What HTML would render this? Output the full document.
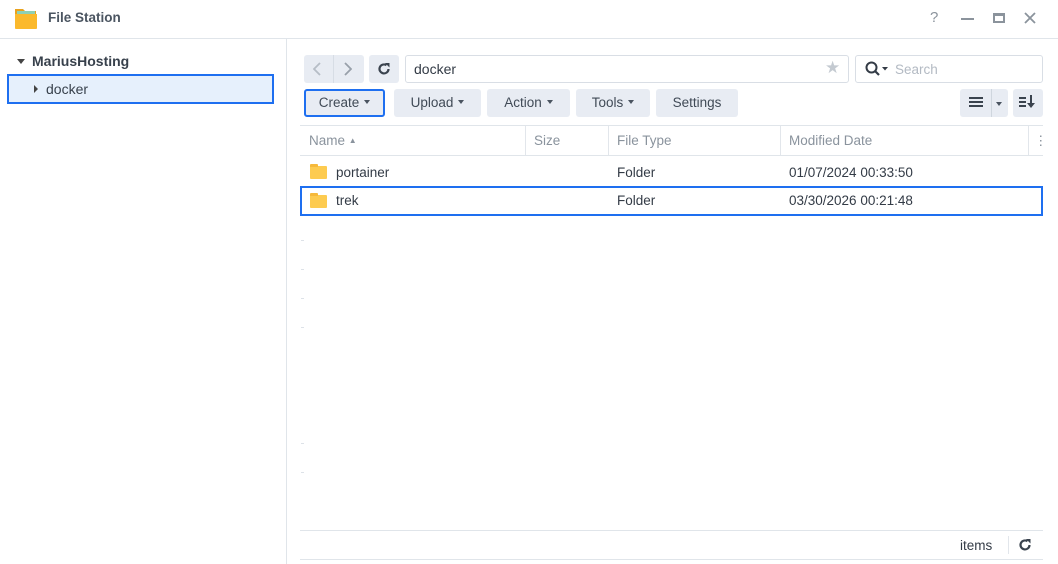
<!DOCTYPE html>
<html><head><meta charset="utf-8"><style>
*{box-sizing:border-box;margin:0;padding:0}
body{width:1058px;height:564px;background:#fff;font-family:"Liberation Sans",sans-serif;font-size:13px;color:#333b46;position:relative;overflow:hidden}
.a{position:absolute}
.btn{position:absolute;background:#e8ecf3;border-radius:3px;height:28px;line-height:28px;text-align:center;color:#404a56;font-size:13.5px}
.caret{display:inline-block;width:0;height:0;border-left:3.5px solid transparent;border-right:3.5px solid transparent;border-top:4px solid #4a5460;vertical-align:middle;margin-left:5px;margin-top:-2px}
.hd{position:absolute;top:126px;height:30px;line-height:29px;color:#8a939d;font-size:13.5px}
.vl{position:absolute;width:1px;background:#e2e6eb}
.row{position:absolute;left:300px;width:743px;height:29px;line-height:29px;font-size:13.5px;color:#333b46}
.fold{position:absolute;left:10px;top:8px;width:17px;height:13px;background:#fdcb50;border-radius:1px}
.fold:before{content:"";position:absolute;left:0;top:-2px;width:8px;height:3px;background:#f6b93b;border-radius:1px 1px 0 0}
.tick{position:absolute;left:301px;width:3px;height:1px;background:#dde2e8}
</style></head><body>
<!-- title bar -->
<div class="a" style="left:14px;top:7px;width:24px;height:24px">
<svg width="24" height="24" viewBox="0 0 24 24"><path d="M1 2h8l2 2h11v17H1z" fill="#e9a21d"/><rect x="3" y="4" width="18" height="6" fill="#8fd0b4"/><path d="M1 7h22v14c0 1-1 1-1 1H2c-1 0-1-1-1-1z" fill="#fbb92c"/></svg></div>
<div class="a" style="left:48px;top:10px;font-size:13.5px;font-weight:bold;color:#4b5561">File Station</div>
<div class="a" style="left:930px;top:9px;color:#8b939c;font-size:15px">?</div>
<div class="a" style="left:961px;top:18px;width:13px;height:2px;background:#8b939c"></div>
<div class="a" style="left:993px;top:13px;width:12px;height:10px;border:2px solid #8b939c;border-top-width:3px"></div>
<svg class="a" style="left:1024px;top:12px" width="12" height="12" viewBox="0 0 12 12"><path d="M1 1l10 10M11 1L1 11" stroke="#8b939c" stroke-width="1.8"/></svg>
<div class="a" style="left:0;top:38px;width:1058px;height:1px;background:#e0e5ea"></div>
<div class="a" style="left:286px;top:39px;width:1px;height:525px;background:#e0e5ea"></div>
<!-- tree -->
<div class="a" style="left:17px;top:59px;border-left:4.5px solid transparent;border-right:4.5px solid transparent;border-top:5px solid #444"></div>
<div class="a" style="left:32px;top:53px;font-weight:bold;font-size:14px;color:#38414c">MariusHosting</div>
<div class="a" style="left:7px;top:74px;width:267px;height:30px;background:#e6f0fc;border:2px solid #1e6ff0"></div>
<div class="a" style="left:34px;top:85px;border-top:4px solid transparent;border-bottom:4px solid transparent;border-left:4.5px solid #444"></div>
<div class="a" style="left:46px;top:81px;font-size:14px;color:#38414c">docker</div>
<!-- nav -->
<div class="btn" style="left:304px;top:55px;width:60px"></div>
<div class="vl" style="left:333px;top:55px;height:28px;background:#d7dde5"></div>
<svg class="a" style="left:313px;top:62px" width="8" height="14" viewBox="0 0 8 14"><path d="M7 1L1 7l6 6" fill="none" stroke="#b6bdc6" stroke-width="1.8"/></svg>
<svg class="a" style="left:344px;top:62px" width="8" height="14" viewBox="0 0 8 14"><path d="M1 1l6 6-6 6" fill="none" stroke="#98a0aa" stroke-width="1.8"/></svg>
<div class="btn" style="left:369px;top:55px;width:30px">
<svg width="14" height="14" viewBox="0 0 14 14" style="margin-top:7px"><path d="M11.5 7A4.5 4.5 0 1 1 9.5 3.2" fill="none" stroke="#3a434e" stroke-width="2.2"/><path d="M8 1h4.5v4.5z" fill="#3a434e"/></svg></div>
<div class="a" style="left:405px;top:55px;width:444px;height:28px;border:1px solid #d9dee5;border-radius:3px"></div>
<div class="a" style="left:414px;top:61px;font-size:14px;color:#333b46">docker</div>
<div class="a" style="left:825px;top:58px;color:#c4cad1;font-size:17px">★</div>
<div class="a" style="left:855px;top:55px;width:188px;height:28px;border:1px solid #d9dee5;border-radius:3px"></div>
<svg class="a" style="left:865px;top:61px" width="26" height="16" viewBox="0 0 26 16"><circle cx="6.5" cy="6.5" r="5" fill="none" stroke="#333b46" stroke-width="2"/><path d="M10 10l4 4" stroke="#333b46" stroke-width="2.2"/><path d="M17 6h6l-3 3.5z" fill="#333b46"/></svg>
<div class="a" style="left:895px;top:62px;color:#b3bac3;font-size:13.5px">Search</div>
<!-- toolbar -->
<div class="btn" style="left:304px;top:89px;width:81px;border:2px solid #1e6ff0;line-height:24px">Create<span class="caret"></span></div>
<div class="btn" style="left:394px;top:89px;width:87px">Upload<span class="caret"></span></div>
<div class="btn" style="left:487px;top:89px;width:83px">Action<span class="caret"></span></div>
<div class="btn" style="left:576px;top:89px;width:74px">Tools<span class="caret"></span></div>
<div class="btn" style="left:656px;top:89px;width:82px">Settings</div>
<div class="btn" style="left:960px;top:89px;width:48px"></div>
<div class="a" style="left:969px;top:97px;width:14px;height:2px;background:#3a434e;box-shadow:0 4px 0 #3a434e,0 8px 0 #3a434e"></div>
<div class="vl" style="left:991px;top:89px;height:28px;background:#cfd6de"></div>
<div class="a" style="left:996px;top:102px;border-left:3.5px solid transparent;border-right:3.5px solid transparent;border-top:4px solid #4a5460"></div>
<div class="btn" style="left:1013px;top:89px;width:30px"></div>
<div class="a" style="left:1019px;top:97px;width:7px;height:2px;background:#3a434e;box-shadow:0 4px 0 #3a434e,0 8px 0 #3a434e"></div>
<div class="a" style="left:1030px;top:95px;width:2px;height:10px;background:#3a434e"></div>
<div class="a" style="left:1027px;top:103px;border-left:4px solid transparent;border-right:4px solid transparent;border-top:5px solid #3a434e"></div>
<!-- header -->
<div class="a" style="left:300px;top:125px;width:743px;height:1px;background:#e0e5ea"></div>
<div class="a" style="left:300px;top:155px;width:743px;height:1px;background:#e0e5ea"></div>
<div class="hd" style="left:309px">Name <span style="font-size:8px;vertical-align:2px">▲</span></div>
<div class="vl" style="left:525px;top:126px;height:29px"></div>
<div class="hd" style="left:534px">Size</div>
<div class="vl" style="left:608px;top:126px;height:29px"></div>
<div class="hd" style="left:617px">File Type</div>
<div class="vl" style="left:780px;top:126px;height:29px"></div>
<div class="hd" style="left:789px">Modified Date</div>
<div class="vl" style="left:1028px;top:126px;height:29px"></div>
<div class="hd" style="left:1034px;color:#8a939d">⋮</div>
<!-- rows -->
<div class="row" style="top:158px"><div class="fold"></div><span class="a" style="left:36px">portainer</span><span class="a" style="left:317px">Folder</span><span class="a" style="left:489px">01/07/2024 00:33:50</span></div>
<div class="row" style="top:186px;border:2px solid #1e6ff0;height:30px;line-height:26px"><div class="fold" style="left:8px;top:7px"></div><span class="a" style="left:34px">trek</span><span class="a" style="left:315px">Folder</span><span class="a" style="left:487px">03/30/2026 00:21:48</span></div>
<div class="tick" style="top:240px"></div><div class="tick" style="top:269px"></div><div class="tick" style="top:298px"></div><div class="tick" style="top:327px"></div><div class="tick" style="top:443px"></div><div class="tick" style="top:472px"></div>
<!-- footer -->
<div class="a" style="left:300px;top:530px;width:743px;height:1px;background:#e0e5ea"></div>
<div class="a" style="left:300px;top:559px;width:743px;height:1px;background:#e0e5ea"></div>
<div class="a" style="left:960px;top:538px;font-size:13.5px;color:#333b46">items</div>
<div class="vl" style="left:1008px;top:536px;height:18px"></div>
<svg class="a" style="left:1018px;top:538px" width="14" height="14" viewBox="0 0 14 14"><path d="M11.5 7A4.5 4.5 0 1 1 9.5 3.2" fill="none" stroke="#3a434e" stroke-width="2.2"/><path d="M8 1h4.5v4.5z" fill="#3a434e"/></svg>
</body></html>
